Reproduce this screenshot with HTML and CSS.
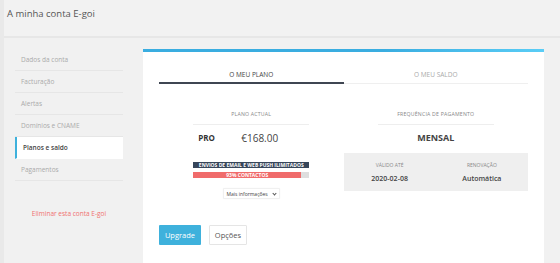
FILE: index.html
```html
<!DOCTYPE html>
<html lang="pt">
<head>
    <meta charset="UTF-8">
    <meta name="viewport" content="width=device-width, initial-scale=1.0">
    <title>A minha conta E-goi</title>
    <link rel="stylesheet" href="styles.css">
</head>
<body>

    <header class="topbar">
        <h1>A minha conta E-goi</h1>
    </header>

    <div class="page">
        <aside class="sidebar">
            <a href="#" class="side-link">Dados da conta</a>
            <a href="#" class="side-link">Facturação</a>
            <a href="#" class="side-link">Alertas</a>
            <a href="#" class="side-link">Domínios e CNAME</a>
            <a href="#" class="side-link active">Planos e saldo</a>
            <a href="#" class="side-link">Pagamentos</a>
            <a href="#" class="delete-link">Eliminar esta conta E-goi</a>
        </aside>

        <main class="card">
            <div class="tabs">
                <div class="tab active">O MEU PLANO</div>
                <div class="tab">O MEU SALDO</div>
            </div>

            <div class="columns">
                <div class="col">
                    <div class="col-title">PLANO ACTUAL</div>
                    <div class="plan-row">
                        <span class="plan-name">PRO</span>
                        <span class="plan-price">€168.00</span>
                    </div>
                    <div class="bar bar-dark">ENVIOS DE EMAIL E WEB PUSH ILIMITADOS</div>
                    <div class="bar bar-track">
                        <div class="bar-fill" style="width: 93%;">93% CONTACTOS</div>
                    </div>
                    <button class="more-btn">Mais informações <span class="chev"></span></button>
                </div>

                <div class="col">
                    <div class="col-title">FREQUÊNCIA DE PAGAMENTO</div>
                    <div class="freq">MENSAL</div>
                    <div class="info-box">
                        <div class="info-cell">
                            <span class="info-label">VÁLIDO ATÉ</span>
                            <span class="info-value">2020-02-08</span>
                        </div>
                        <div class="info-cell">
                            <span class="info-label">RENOVAÇÃO</span>
                            <span class="info-value">Automática</span>
                        </div>
                    </div>
                </div>
            </div>

            <div class="actions">
                <button class="btn btn-primary">Upgrade</button>
                <button class="btn btn-default">Opções</button>
            </div>
        </main>
    </div>

</body>
</html>
```

FILE: styles.css
```css
* {
    box-sizing: border-box;
}

html, body {
    margin: 0;
    padding: 0;
    height: 100%;
    overflow: hidden;
    background-color: #f1f1f1;
    font-family: "Open Sans", "Noto Sans", Arial, sans-serif;
    color: #555;
}

body {
    display: flex;
    flex-direction: column;
    border-left: 4px solid #e9e9e9;
}

.topbar {
    flex-shrink: 0;
    height: 38px;
    padding-left: 3px;
    background-color: #f2f2f2;
    border-bottom: 2px solid #e7e7e7;
}

.topbar h1 {
    margin: 0;
    padding-top: 8px;
    font-size: 9.5px;
    line-height: 12px;
    font-weight: 400;
    color: #555;
}

.page {
    flex: 1;
    min-height: 0;
    display: flex;
    padding-top: 11px;
}

/* sidebar */

.sidebar {
    width: 139px;
    padding-left: 11px;
    padding-right: 20px;
    display: flex;
    flex-direction: column;
}

.side-link {
    display: block;
    height: 22px;
    line-height: 21px;
    padding-left: 6px;
    font-size: 6.5px;
    color: #aaa;
    text-decoration: none;
    border-bottom: 1px solid #e6e6e6;
}

.side-link.active {
    background-color: #fff;
    border-left: 2px solid #3eb1dc;
    border-bottom-color: #fff;
    padding-left: 6px;
    color: #444;
    font-weight: 600;
}

.delete-link {
    margin-top: 28px;
    text-align: center;
    font-size: 6.5px;
    line-height: 10px;
    color: #f07070;
    text-decoration: none;
}

/* card */

.card {
    width: 401px;
    background-color: #fff;
    border-top: 3px solid #3aade0;
    border-image: linear-gradient(to right, #3aade0 60%, #5acdf6) 1;
    border-left: 0;
    border-right: 0;
    border-bottom: 0;
    padding: 18px 16px 0;
}

.tabs {
    display: flex;
}

.tab {
    flex: 1;
    text-align: center;
    font-size: 6.5px;
    line-height: 10px;
    padding-bottom: 2px;
    color: #aaa;
    border-bottom: 1px solid #efefef;
}

.tab.active {
    color: #444;
    border-bottom: 2px solid #3f4652;
}

.columns {
    display: flex;
}

.col {
    flex: 1;
    display: flex;
    flex-direction: column;
    align-items: center;
}

.col-title {
    width: 116px;
    margin-top: 25px;
    padding-bottom: 5px;
    text-align: center;
    font-size: 5.2px;
    line-height: 10px;
    letter-spacing: 0.2px;
    color: #888;
    border-bottom: 1px solid #eee;
}

.plan-row {
    width: 116px;
    margin-top: 7px;
    padding-left: 5px;
    display: flex;
    line-height: 12px;
}

.plan-name {
    width: 43px;
    font-size: 8px;
    font-weight: 700;
    color: #333;
}

.plan-price {
    font-size: 10px;
    color: #444;
}

.bar {
    width: 116px;
    height: 6px;
    font-size: 5px;
    line-height: 6px;
    font-weight: 700;
    color: #fff;
    text-align: center;
    white-space: nowrap;
}

.bar-dark {
    margin-top: 18px;
    background-color: #37465a;
}

.bar-track {
    margin-top: 4px;
    background-color: #dedede;
}

.bar-fill {
    height: 100%;
    background-color: #f06b6b;
}

.more-btn {
    margin-top: 10px;
    width: 57px;
    height: 11px;
    padding: 0;
    font-family: inherit;
    font-size: 5px;
    color: #444;
    background-color: #fff;
    border: 1px solid #f0f0f0;
    border-radius: 1px;
    box-shadow: 0 0 1px rgba(0, 0, 0, 0.08);
}

.chev {
    display: inline-block;
    width: 3px;
    height: 3px;
    margin-left: 4px;
    border-right: 1px solid #555;
    border-bottom: 1px solid #555;
    transform: translateY(-1px) rotate(45deg);
}

.freq {
    margin-top: 7px;
    line-height: 12px;
    font-size: 9px;
    font-weight: 700;
    color: #444;
}

.info-box {
    width: 100%;
    height: 38px;
    margin-top: 9px;
    display: flex;
    background-color: #efefef;
}

.info-cell {
    flex: 1;
    display: flex;
    flex-direction: column;
    align-items: center;
    padding-top: 8px;
}

.info-label {
    font-size: 5px;
    line-height: 8px;
    color: #888;
}

.info-value {
    margin-top: 6px;
    font-size: 7px;
    line-height: 8px;
    font-weight: 600;
    color: #444;
}

.actions {
    margin-top: 26px;
    display: flex;
    gap: 8px;
}

.btn {
    height: 20px;
    padding: 0;
    font-family: inherit;
    font-size: 7.5px;
    border-radius: 1px;
}

.btn-primary {
    width: 42px;
    background-color: #3eb1dc;
    color: #fff;
    border: none;
}

.btn-default {
    width: 38px;
    background-color: #fff;
    color: #555;
    border: 1px solid #e5e5e5;
}
```
